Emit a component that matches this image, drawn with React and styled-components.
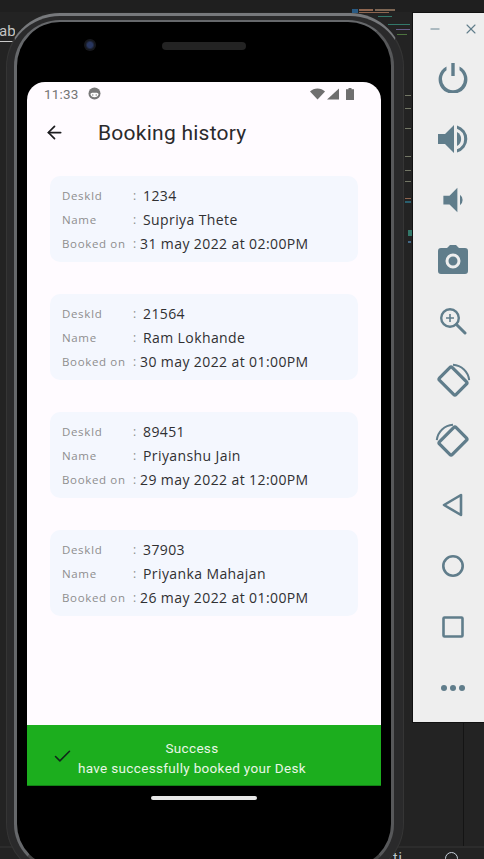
import React from "react";
import styled, { createGlobalStyle } from "styled-components";
import { ArrowLeft, Check, Minus, X } from "lucide-react";

const Global = createGlobalStyle`
  html, body { margin: 0; padding: 0; background: #232323; }
  #root { width: 484px; height: 859px; }
`;

const Desktop = styled.div`
  position: relative;
  width: 484px;
  height: 859px;
  overflow: hidden;
  background: #232323;
  font-family: "Inter", "Liberation Sans", sans-serif;
`;

const TopStrip = styled.div`
  position: absolute;
  inset: 0 0 auto 0;
  height: 12px;
  background: #1f1f1f;
`;

const TabLabel = styled.span`
  position: absolute;
  left: -1px;
  top: 22px;
  padding-bottom: 1px;
  border-bottom: 1px solid #c9c9c9;
  font: 15px "Roboto", sans-serif;
  color: #c4c4c4;
  width: 16px;
  overflow: hidden;
`;

const CodeMark = styled.i`
  position: absolute;
  left: ${(p) => p.$x}px;
  top: ${(p) => p.$y}px;
  width: ${(p) => p.$w}px;
  height: ${(p) => p.$h || 2}px;
  background: ${(p) => p.$c};
`;

const BottomRule = styled.div`
  position: absolute;
  inset: 846px 0 0 0;
  border-top: 2px solid #2c2c2c;
`;

const VerticalRule = styled.div`
  position: absolute;
  left: 463px;
  top: 723px;
  height: 123px;
  width: 1px;
  background: #141414;
`;

const BottomGlyphs = styled.span`
  position: absolute;
  left: 393px;
  top: 850px;
  font: 14px "Roboto", sans-serif;
  color: #b9c7d6;
  letter-spacing: 1px;
`;

const BottomRing = styled.span`
  position: absolute;
  left: 445px;
  top: 852px;
  width: 11px;
  height: 11px;
  border: 1.5px solid #c7d0da;
  border-radius: 50%;
`;

const Shell = styled.div`
  position: absolute;
  left: 6px;
  top: 13px;
  width: 398px;
  height: 864px;
  box-sizing: border-box;
  padding: 4px 9px 6px 7px;
  border-radius: 54px;
  background: #2a2a2b;
  border: 1px solid #353535;
  border-top: 3px solid #77797c;
`;

const Bezel = styled.div`
  box-sizing: border-box;
  height: 100%;
  border: 3px solid #66686b;
  border-top-width: 2px;
  border-right-color: #57585a;
  border-bottom-color: #444;
  border-radius: 46px;
  background: #000;
  display: flex;
  flex-direction: column;
  align-items: center;
  padding-top: 10px;
`;

const EarRow = styled.div`
  position: relative;
  width: 100%;
  height: 28px;
  display: flex;
  justify-content: center;
  align-items: center;
`;

const Camera = styled.span`
  position: absolute;
  left: 67px;
  top: 7px;
  width: 12px;
  height: 12px;
  border-radius: 50%;
  background: radial-gradient(circle, #28365f 0 30%, #15171d 55%, #1d1d1f 100%);
`;

const Speaker = styled.span`
  width: 84px;
  height: 8px;
  border-radius: 4px;
  background: #232323;
`;

const Screen = styled.div`
  width: 354px;
  height: 704px;
  margin-top: 22px;
  border-radius: 18px 18px 0 0;
  overflow: hidden;
  background: #fffbff;
  display: flex;
  flex-direction: column;
`;

const StatusBar = styled.div`
  height: 23px;
  flex: none;
  display: flex;
  align-items: center;
  padding: 0 27px 0 17px;
  color: #757575;
  font: 13.5px "Roboto", sans-serif;
  letter-spacing: 0.2px;
`;

const StatusLeft = styled.div`
  display: flex;
  align-items: center;
  gap: 9px;
  flex: 1;
`;

const StatusIcons = styled.div`
  display: flex;
  align-items: center;
  gap: 2px;
`;

const AppBar = styled.header`
  height: 55px;
  flex: none;
  display: flex;
  align-items: center;
  padding-left: 17px;
  color: #1c1c1f;
`;

const Title = styled.h1`
  margin: 0 0 0 33px;
  font: 400 21px "Roboto", sans-serif;
  letter-spacing: 0.25px;
  color: #2a2a2c;
`;

const List = styled.main`
  flex: 1;
  display: flex;
  flex-direction: column;
  gap: 32px;
  padding: 16px 23px 0;
`;

const Card = styled.section`
  height: 86px;
  box-sizing: border-box;
  padding: 7px 12px 0;
  border-radius: 10px;
  background: #f4f7fe;
  display: flex;
  flex-direction: column;
`;

const Row = styled.div`
  height: 24px;
  display: flex;
  align-items: center;
  white-space: nowrap;
`;

const Label = styled.span`
  width: 71px;
  flex: none;
  font: 11.5px "Open Sans", sans-serif;
  color: #8e8e8e;
  letter-spacing: 0.65px;
`;

const Colon = styled.span`
  width: ${(p) => (p.$tight ? 7 : 10)}px;
  flex: none;
  font: 12px "Open Sans", sans-serif;
  color: #8e8e8e;
`;

const Value = styled.span`
  font: 14px "Open Sans", sans-serif;
  color: #303032;
  letter-spacing: 0.4px;
`;

const Snackbar = styled.footer`
  height: 61px;
  flex: none;
  display: flex;
  align-items: center;
  background: #1cae1e;
  border-bottom: 1px solid #128216;
  box-sizing: border-box;
  padding: 0 0 0 25px;
  color: #e9f6e6;
`;

const CheckMark = styled.span`
  display: flex;
  margin-top: 2px;
`;

const SnackText = styled.div`
  margin: 6px 0 0 5px;
  display: flex;
  flex-direction: column;
  align-items: center;
  font: 13.5px/20px "Roboto", sans-serif;
  letter-spacing: 0.33px;
`;

const HomeBar = styled.div`
  width: 106px;
  height: 4px;
  margin-top: 10px;
  border-radius: 2px;
  background: #e8e8e8;
`;

const Panel = styled.aside`
  position: absolute;
  left: 412px;
  top: 12px;
  width: 72px;
  height: 711px;
  background: #eeeeee;
  border-left: 1px solid #111;
  border-top: 1px solid #111;
  border-bottom: 1px solid #111;
  box-sizing: border-box;
  display: flex;
  flex-direction: column;
  align-items: center;
  color: #607d8b;
`;

const WindowControls = styled.div`
  width: 100%;
  height: 34px;
  flex: none;
  display: flex;
  align-items: center;
  justify-content: space-between;
  padding: 0 5px 2px 15px;
  box-sizing: border-box;
`;

const Tool = styled.button`
  width: 48px;
  height: ${(p) => p.$h}px;
  flex: none;
  padding: 0;
  margin-left: 9px;
  border: 0;
  background: none;
  color: inherit;
  display: flex;
  align-items: center;
  justify-content: center;
`;

const Icon = ({ size = 32, children }) => (
  <svg width={size} height={size} viewBox="0 0 32 32" fill="currentColor">
    {children}
  </svg>
);

const Face = () => (
  <svg width="13" height="13" viewBox="0 0 13 13">
    <circle cx="6.5" cy="6.5" r="6" fill="#787878" />
    <path d="M2.4 7a4.2 4.2 0 0 0 8.2 0c-1-1.2-1.5-1.2-2.2-1.2H4.6C3.9 5.8 3.3 5.8 2.4 7Z" fill="#fff" />
    <circle cx="4.8" cy="8" r=".7" fill="#787878" />
    <circle cx="8.2" cy="8" r=".7" fill="#787878" />
  </svg>
);

const Wifi = () => (
  <svg width="15" height="12" viewBox="0 0 15 12">
    <path d="M0 3.5C2 1.5 4.6.5 7.5.5S13 1.500 15 3.500L7.500 11.500Z" fill="#6f6f6f" />
  </svg>
);

const Signal = () => (
  <svg width="12" height="12" viewBox="0 0 12 12">
    <path d="M0 11.500 12 .5v11Z" fill="#6f6f6f" />
  </svg>
);

const Battery = () => (
  <svg width="8" height="12" viewBox="0 0 8 12" style={{ marginLeft: 5 }}>
    <path d="M2.500 0h3v1.300H8V12H0V1.300h2.500Z" fill="#6f6f6f" />
  </svg>
);

const RotateIcon = ({ flip }) => (
  <svg width="36" height="36" viewBox="0 0 40 40" fill="none" stroke="currentColor">
    <g transform={flip ? "matrix(-1 0 0 1 40 0)" : undefined}>
      <rect x="10" y="7" width="20" height="26" rx="2" strokeWidth="3.600" transform="rotate(-45 20 20)" />
      <path d="M20 2A19 19 0 0 1 38 19" strokeWidth="2.200" />
    </g>
  </svg>
);

const bookings = [
  { id: "1234", name: "Supriya Thete", at: "31 may 2022 at 02:00PM" },
  { id: "21564", name: "Ram Lokhande", at: "30 may 2022 at 01:00PM" },
  { id: "89451", name: "Priyanshu Jain", at: "29 may 2022 at 12:00PM" },
  { id: "37903", name: "Priyanka Mahajan", at: "26 may 2022 at 01:00PM" },
];

const marks = [
  [352, 9, 6, 4, "#2a5a82"], [359, 9, 14, 2, "#8f6650"], [375, 9, 20, 2, "#7d6654"],
  [359, 12, 30, 1, "#8f6650"], [378, 16, 14, 1, "#33786a"], [388, 24, 22, 1, "#33786a"],
  [396, 29, 14, 1, "#675d8a"], [397, 34, 10, 1, "#4d733e"],
  [405, 95, 6, 1, "#737766"], [405, 108, 6, 1, "#737766"], [405, 128, 6, 1, "#737766"],
  [405, 156, 6, 1, "#737766"], [405, 170, 6, 1, "#737766"], [405, 181, 6, 1, "#737766"],
  [405, 198, 6, 1, "#8f6650"], [405, 201, 6, 2, "#2a5f6e"], [408, 230, 4, 6, "#33786a"],
  [408, 241, 3, 2, "#426887"],
];

export default function App() {
  return (
    <Desktop>
      <Global />
      <TopStrip />
      <TabLabel>ab</TabLabel>
      {marks.map(([x, y, w, h, c], i) => (
        <CodeMark key={i} $x={x} $y={y} $w={w} $h={h} $c={c} />
      ))}
      <BottomRule />
      <VerticalRule />
      <BottomGlyphs>ti</BottomGlyphs>
      <BottomRing />

      <Shell>
        <Bezel>
          <EarRow>
            <Camera />
            <Speaker />
          </EarRow>
          <Screen>
            <StatusBar>
              <StatusLeft>
                11:33 <Face />
              </StatusLeft>
              <StatusIcons>
                <Wifi />
                <Signal />
                <Battery />
              </StatusIcons>
            </StatusBar>
            <AppBar>
              <ArrowLeft size={21} strokeWidth={2} />
              <Title>Booking history</Title>
            </AppBar>
            <List>
              {bookings.map((b) => (
                <Card key={b.id}>
                  <Row>
                    <Label>DeskId</Label>
                    <Colon>:</Colon>
                    <Value>{b.id}</Value>
                  </Row>
                  <Row>
                    <Label>Name</Label>
                    <Colon>:</Colon>
                    <Value>{b.name}</Value>
                  </Row>
                  <Row>
                    <Label>Booked on</Label>
                    <Colon $tight>:</Colon>
                    <Value>{b.at}</Value>
                  </Row>
                </Card>
              ))}
            </List>
            <Snackbar>
              <CheckMark>
                <Check size={21} color="#10281a" strokeWidth={1.8} />
              </CheckMark>
              <SnackText>
                <span>Success</span>
                <span>have successfully booked your Desk</span>
              </SnackText>
            </Snackbar>
          </Screen>
          <HomeBar />
        </Bezel>
      </Shell>

      <Panel>
        <WindowControls>
          <Minus size={14} strokeWidth={1.6} />
          <X size={16} strokeWidth={1.6} />
        </WindowControls>
        <Tool $h={60}>
          <Icon>
            <path d="M14.300 2h3.400v13h-3.400Z" />
            <path d="M9.500 5.500v3.800a11 11 0 1 0 13 0V5.500a14.400 14.400 0 1 1-13 0Z" />
          </Icon>
        </Tool>
        <Tool $h={64}>
          <Icon>
            <path d="M1 11h7l9-9v28l-9-9H1Z" />
            <path d="M20 9a8 8 0 0 1 0 14Z" />
            <path d="M20 2.500a14 14 0 0 1 0 27v-3.200a11 11 0 0 0 0-20.600Z" />
          </Icon>
        </Tool>
        <Tool $h={58}>
          <Icon size={28}>
            <path d="M5 11h7l9-9v28l-9-9H5Z" />
            <path d="M24 10a7.500 7.500 0 0 1 0 12Z" />
          </Icon>
        </Tool>
        <Tool $h={62}>
          <Icon>
            <path fillRule="evenodd" d="M4 4h6l3-3h6l3 3h6a3 3 0 0 1 3 3v20a3 3 0 0 1-3 3H4a3 3 0 0 1-3-3V7a3 3 0 0 1 3-3Zm12 5.500a7.500 7.500 0 1 0 0 15 7.500 7.500 0 0 0 0-15Zm0 3a4.500 4.500 0 1 1 0 9 4.500 4.500 0 0 1 0-9Z" />
          </Icon>
        </Tool>
        <Tool $h={60}>
          <svg width="28" height="28" viewBox="0 0 28 28" fill="none" stroke="currentColor">
            <circle cx="11" cy="11" r="8.800" strokeWidth="2.400" />
            <path d="M11 7v8M7 11h8" strokeWidth="1.600" />
            <path d="M17.500 17.500 26 26" strokeWidth="3" strokeLinecap="round" />
          </svg>
        </Tool>
        <Tool $h={60}>
          <RotateIcon />
        </Tool>
        <Tool $h={60}>
          <RotateIcon flip />
        </Tool>
        <Tool $h={68}>
          <svg width="24" height="26" viewBox="0 0 24 26" fill="none" stroke="currentColor" strokeWidth="2.600" strokeLinejoin="round">
            <path d="M20 3v20L3 13Z" />
          </svg>
        </Tool>
        <Tool $h={54}>
          <svg width="24" height="24" viewBox="0 0 24 24" fill="none" stroke="currentColor" strokeWidth="2.600">
            <circle cx="12" cy="12" r="9.700" />
          </svg>
        </Tool>
        <Tool $h={68}>
          <svg width="24" height="24" viewBox="0 0 24 24" fill="none" stroke="currentColor" strokeWidth="2.600" strokeLinejoin="round">
            <rect x="2.500" y="2.500" width="19" height="19" rx="1" />
          </svg>
        </Tool>
        <Tool $h={54}>
          <svg width="26" height="8" viewBox="0 0 26 8" fill="currentColor">
            <circle cx="4" cy="4" r="3" />
            <circle cx="13" cy="4" r="3" />
            <circle cx="22" cy="4" r="3" />
          </svg>
        </Tool>
      </Panel>
    </Desktop>
  );
}
